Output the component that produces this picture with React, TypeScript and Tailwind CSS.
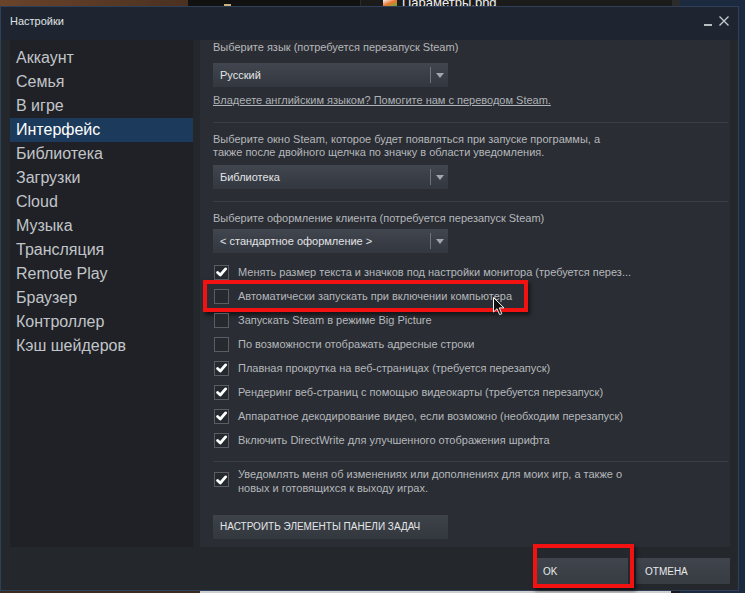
import * as React from 'react'

const navItems = [
  'Аккаунт',
  'Семья',
  'В игре',
  'Интерфейс',
  'Библиотека',
  'Загрузки',
  'Cloud',
  'Музыка',
  'Трансляция',
  'Remote Play',
  'Браузер',
  'Контроллер',
  'Кэш шейдеров',
]

const options = [
  { label: 'Менять размер текста и значков под настройки монитора (требуется перез...', checked: true },
  { label: 'Автоматически запускать при включении компьютера', checked: false, marked: true },
  { label: 'Запускать Steam в режиме Big Picture', checked: false },
  { label: 'По возможности отображать адресные строки', checked: false },
  { label: 'Плавная прокрутка на веб-страницах (требуется перезапуск)', checked: true },
  { label: 'Рендеринг веб-страниц с помощью видеокарты (требуется перезапуск)', checked: true },
  { label: 'Аппаратное декодирование видео, если возможно (необходим перезапуск)', checked: true },
  { label: 'Включить DirectWrite для улучшенного отображения шрифта', checked: true },
]

function Check({ checked }: { checked: boolean }) {
  return (
    <span className="flex h-[15px] w-[15px] shrink-0 items-center justify-center border border-[#5a5e64] bg-[#26292e]">
      {checked && (
        <svg width="11" height="10" viewBox="0 0 11 10">
          <path
            d="M1.6 5.4 L4.3 8 L9.6 1.9"
            stroke="#fff"
            strokeWidth="2.8"
            fill="none"
            strokeLinecap="round"
            strokeLinejoin="round"
          />
        </svg>
      )}
    </span>
  )
}

function Dropdown({ value, className = '' }: { value: string; className?: string }) {
  return (
    <div className={`flex h-[24px] w-[235px] items-center bg-linear-to-b from-[#41464f] to-[#33373f] pl-[7px] ${className}`}>
      <span className="flex-1 text-[11px] leading-[14px] text-[#e2e4e6]">{value}</span>
      <span className="h-[16px] w-px bg-[#6f737a]" />
      <span className="flex w-[17px] justify-center">
        <svg width="8" height="5" viewBox="0 0 8 5">
          <path d="M0 0h8L4 5z" fill="#a3a7ac" />
        </svg>
      </span>
    </div>
  )
}

function Separator({ className = '' }: { className?: string }) {
  return <div className={`h-px w-full bg-[#3b3e44] ${className}`} />
}

function Desktop() {
  return (
    <div className="flex h-[6px] overflow-hidden">
      <div className="w-[188px] bg-linear-to-r from-[#6a432a] to-[#4b3121]" />
      <div className="flex w-[172px] items-end bg-[#111111] pl-[36px]">
        <span className="h-[2px] w-[7px] bg-[#c9b27a]" />
      </div>
      <div className="flex w-[312px] items-end gap-[5px] border-l border-[#2a2a2a] bg-[#1b1b1b] pl-[22px]">
        <span className="h-[6px] w-[14px] bg-linear-to-br from-[#f2f2f2] via-[#e8742a] to-[#5aa63a]" />
        <span className="-mb-[3px] text-[13px] leading-[13px] text-[#f0f0f0]">Параметры.png</span>
      </div>
      <div className="w-[8px] bg-[#2b2b2b]" />
      <div className="flex-1 bg-[#1b2a3e]" />
    </div>
  )
}

function TitleBar() {
  return (
    <div className="flex h-[33px] items-start bg-[#1f2530] pl-[9px] pr-[9px] pt-[7px]">
      <span className="flex-1 text-[11px] leading-[14px] text-[#dfe3e6]">Настройки</span>
      <span className="mt-[10px] h-[2px] w-[8px] bg-[#b9bdc2]" />
      <svg className="ml-[7px] mt-[2px]" width="10" height="10" viewBox="0 0 10 10">
        <path d="M0.5 0.5 L9.5 9.5 M9.5 0.5 L0.5 9.5" stroke="#c4c8cc" strokeWidth="1.4" />
      </svg>
    </div>
  )
}

function Nav() {
  return (
    <div className="flex w-[183px] flex-col bg-[#1f2126] pt-[6px]">
      {navItems.map((item) => (
        <div
          key={item}
          className={`flex h-[24px] items-center pl-[6px] text-[16px] ${
            item === 'Интерфейс' ? 'bg-[#1c3a5b] text-white' : 'text-[#c2c5c9]'
          }`}
        >
          {item}
        </div>
      ))}
    </div>
  )
}

function Content() {
  return (
    <div className="flex w-[530px] flex-col bg-[#2a2d33] pl-[13px] pr-[2px] text-[11px] leading-[14px] text-[#b5b8bc]">
      <p>Выберите язык (потребуется перезапуск Steam)</p>
      <Dropdown value="Русский" className="mt-[9px]" />
      <a className="mt-[6px] w-fit text-[#aeb2b6] underline">
        Владеете английским языком? Помогите нам с переводом Steam.
      </a>
      <Separator className="mt-[15px]" />
      <p className="mt-[10px] leading-[13px]">
        Выберите окно Steam, которое будет появляться при запуске программы, а
        <br />
        также после двойного щелчка по значку в области уведомления.
      </p>
      <Dropdown value="Библиотека" className="mt-[6px]" />
      <Separator className="mt-[12px]" />
      <p className="mt-[9px]">Выберите оформление клиента (потребуется перезапуск Steam)</p>
      <Dropdown value="< стандартное оформление >" className="mt-[4px]" />

      <div className="mt-[7px] flex flex-col">
        {options.map((o) => (
          <div key={o.label} className="relative flex h-[24px] items-center gap-[9px] pl-px">
            <Check checked={o.checked} />
            <span>{o.label}</span>
            {o.marked && (
              <div className="absolute left-[-10px] top-[-4px] h-[32px] w-[325px] border-4 border-[#f21212] shadow-[2px_3px_4px_rgba(0,0,0,0.55)]" />
            )}
          </div>
        ))}
      </div>

      <Separator className="mt-[9px]" />
      <div className="mt-[5px] flex items-start gap-[9px] pl-px">
        <span className="mt-[5px]">
          <Check checked />
        </span>
        <p>
          Уведомлять меня об изменениях или дополнениях для моих игр, а также о
          <br />
          новых и готовящихся к выходу играх.
        </p>
      </div>
      <button className="mt-[20px] flex h-[24px] w-[235px] items-center bg-linear-to-b from-[#3e434b] to-[#33373e] pl-[7px] text-[10px] text-[#e4e6e8]">
        НАСТРОИТЬ ЭЛЕМЕНТЫ ПАНЕЛИ ЗАДАЧ
      </button>
    </div>
  )
}

function Footer() {
  return (
    <div className="flex h-[43px] items-start justify-end gap-[8px] pr-[8px] pt-[11px]">
      <div className="relative">
        <button className="flex h-[26px] w-[91px] items-center bg-linear-to-b from-[#40444c] to-[#373b42] pl-[6px] text-[10px] text-[#e8eaec]">
          OK
        </button>
        <div className="absolute left-[-4px] top-[-14px] h-[44px] w-[101px] border-4 border-[#f21212] shadow-[2px_3px_4px_rgba(0,0,0,0.55)]" />
      </div>
      <button className="flex h-[26px] w-[94px] items-center bg-linear-to-b from-[#40444c] to-[#373b42] pl-[9px] text-[10px] text-[#e8eaec]">
        ОТМЕНА
      </button>
    </div>
  )
}

function Cursor() {
  return (
    <svg className="absolute left-[493px] top-[297px]" width="12" height="19" viewBox="0 0 12 19">
      <path
        d="M0.5 0.5 L0.5 15 L4 11.7 L6.6 17.6 L8.8 16.7 L6.3 10.9 L11 10.9 Z"
        fill="#111"
        stroke="#f4f4f4"
        strokeWidth="1"
        strokeLinejoin="round"
      />
    </svg>
  )
}

export default function App() {
  return (
    <div className="relative h-[593px] w-[745px] overflow-hidden bg-[#1b2a3e] font-['Liberation_Sans',Arial,sans-serif]">
      <Desktop />
      <div className="flex">
        <div className="flex h-[585px] w-[739px] flex-col border border-[#2d4058] bg-[#24272c]">
          <TitleBar />
          <div className="flex h-[507px] gap-[7px] pl-[9px]">
            <Nav />
            <Content />
          </div>
          <Footer />
        </div>
        <div className="flex-1 bg-[#1b2a3e]" />
      </div>
      <div className="flex h-[2px]">
        <div className="w-[200px] bg-[#3b2a1f]" />
        <div className="w-[471px] bg-[#cfcfcf]" />
        <div className="w-[9px] bg-[#1a1a1a]" />
        <div className="flex-1 bg-[#1b2a3e]" />
      </div>
      <Cursor />
    </div>
  )
}
